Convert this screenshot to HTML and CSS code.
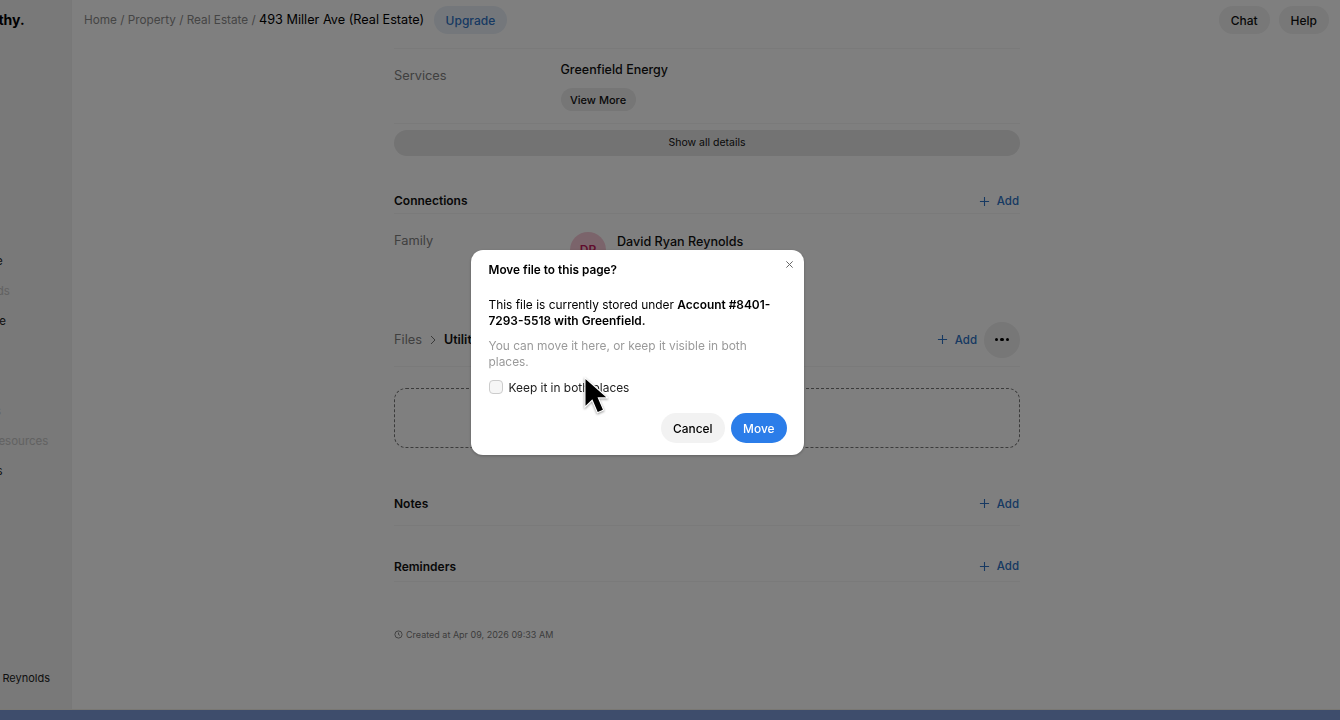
FILE: index.html
```html
<!DOCTYPE html>
<html lang="en">
<head>
<meta charset="utf-8">
<title>493 Miller Ave (Real Estate)</title>
<link rel="stylesheet" href="styles.css">
</head>
<body>
<div class="app">
  <aside class="sidebar">
    <div class="side-inner">
      <div class="logo">Worthy.</div>
      <nav class="nav">
        <div class="nav-item">Vehicle</div>
        <div class="nav-item muted">Rewards</div>
        <div class="nav-item">Finance</div>
        <div class="nav-item muted gap">Guides</div>
        <div class="nav-item muted">Your Resources</div>
        <div class="nav-item">Groups</div>
      </nav>
      <div class="user">Daniel Reynolds</div>
    </div>
  </aside>
  <main class="main">
    <header class="topbar">
      <div class="crumbs"><span class="crumb">Home / Property / Real Estate / </span><span class="current">493 Miller Ave (Real Estate)</span></div>
      <a class="pill upgrade">Upgrade</a>
      <div class="top-actions"><a class="pill">Chat</a><a class="pill">Help</a></div>
    </header>
    <div class="content">
      <section class="detail services">
        <div class="label">Services</div>
        <div class="value">
          <div class="name">Greenfield Energy</div>
          <a class="view-more">View More</a>
        </div>
      </section>
      <a class="show-all">Show all details</a>
      <section class="head connections"><h2>Connections</h2><a class="add"><svg class="plus" viewBox="0 0 12 12"><path d="M6 1v10M1 6h10"/></svg>Add</a></section>
      <section class="detail family">
        <div class="label">Family</div>
        <div class="avatar">DR</div>
        <div class="name">David Ryan Reynolds</div>
      </section>
      <section class="head files">
        <div class="path"><span class="label">Files</span><svg class="chev" viewBox="0 0 8 10"><path d="M2 1l4 4-4 4"/></svg><strong>Utilities</strong></div>
        <a class="add"><svg class="plus" viewBox="0 0 12 12"><path d="M6 1v10M1 6h10"/></svg>Add</a>
        <a class="more"><i></i><i></i><i></i></a>
      </section>
      <div class="drop"></div>
      <section class="head notes"><h2>Notes</h2><a class="add"><svg class="plus" viewBox="0 0 12 12"><path d="M6 1v10M1 6h10"/></svg>Add</a></section>
      <section class="head reminders"><h2>Reminders</h2><a class="add"><svg class="plus" viewBox="0 0 12 12"><path d="M6 1v10M1 6h10"/></svg>Add</a></section>
      <div class="created"><svg class="clock" viewBox="0 0 10 10"><circle cx="5" cy="5" r="4"/><path d="M5 2.8V5l1.6 1"/></svg>Created at Apr 09, 2026 09:33 AM</div>
    </div>
  </main>
</div>
<div class="taskbar"></div>
<div class="scrim"></div>
<div class="dialog">
  <svg class="close" viewBox="0 0 10 10"><path d="M1.5 1.5l7 7M8.5 1.5l-7 7"/></svg>
  <h1>Move file to this page?</h1>
  <p class="msg">This file is currently stored under <b>Account #8401-7293-5518 with Greenfield.</b></p>
  <p class="hint">You can move it here, or keep it visible in both places.</p>
  <label class="check"><span class="box"></span>Keep it in both places</label>
  <div class="actions"><a class="btn cancel">Cancel</a><a class="btn move">Move</a></div>
</div>
<svg class="cursor" viewBox="0 0 26 42"><path d="M2 1.5V32l7.5-7 5.5 13 6.5-3-5.5-12.5H26z"/></svg>
</body>
</html>
```
FILE: styles.css
```css
* { box-sizing: border-box; }
html, body { margin: 0; height: 720px; overflow: hidden; }
body { font-family: Inter, "Liberation Sans", sans-serif; color: #000; background: #fff; display: flex; flex-direction: column; }
a { display: inline-flex; align-items: center; }

.app { flex: 1; display: flex; min-height: 0; }
.taskbar { height: 11px; border-top: 1px solid #f4f1e6; background: #7d9bd8; }

.sidebar { width: 72px; flex: none; background: #f2f2f2; border-right: 1px solid #f0f0f0; overflow: hidden; }
.side-inner { width: 240px; margin-left: -37px; height: 100%; display: flex; flex-direction: column; font-size: 11.5px; }
.logo { font-weight: 700; font-size: 14px; height: 40px; line-height: 39px; margin-left: 7px; }
.nav { padding-top: 213px; display: flex; flex-direction: column; }
.nav-item { height: 30px; line-height: 17px; color: #222; }
.nav-item.muted { color: #c4c4c4; }
.nav-item.gap { margin-top: 60px; }
.user { margin: auto 0 24px 4px; font-size: 11px; line-height: 14px; color: #222; }

.main { flex: 1; min-width: 0; display: flex; flex-direction: column; }
.topbar { height: 40px; flex: none; padding: 6px 11px 0 12px; display: flex; align-items: flex-start; }
.crumbs { font-size: 12.7px; line-height: 28px; white-space: pre; }
.crumb { color: #8a8a8a; font-size: 11.75px; }
.pill { height: 28px; padding: 0 12px; border-radius: 14px; background: #f0f0f0; font-size: 12px; font-weight: 500; color: #111; }
.upgrade { margin-left: 10px; padding: 0 11.5px; background: #e8eff7; color: #2e72c4; }
.top-actions { margin-left: auto; display: flex; gap: 9px; }

.content { width: 626px; margin-left: 322px; }
.label { color: #808080; font-size: 12.8px; }
.name { font-size: 12.5px; font-weight: 500; color: #111; }
.detail { display: flex; }
.services { height: 76px; margin-top: 8px; padding-top: 19px; border-top: 1px solid #f4f4f4; border-bottom: 1px solid #f4f4f4; }
.services .label { width: 166.5px; }
.services .name { line-height: 26px; margin-top: -11px; }
.view-more { height: 23px; margin-top: 5px; padding: 0 9.5px; border-radius: 12px; background: #ececec; font-size: 11px; font-weight: 500; color: #111; }
.show-all { display: flex; justify-content: center; height: 26px; margin-top: 6px; padding-bottom: 1px; border-radius: 13px; background: #e6e6e6; font-size: 10.5px; color: #111; }

.head { display: flex; align-items: center; border-bottom: 1px solid #f4f4f4; }
h2 { margin: 0; font-size: 12px; font-weight: 600; color: #111; }
.add { margin-left: auto; padding-right: 1px; gap: 7px; font-size: 11.5px; font-weight: 500; color: #2e72c4; }
.plus { width: 11px; height: 11px; fill: none; stroke: currentColor; stroke-width: 1.2; }
.connections { height: 27px; margin-top: 31px; }
.connections .add { padding-top: 2px; }

.family { height: 91px; padding-top: 19px; }
.family .label { width: 176px; }
.family .name { margin-top: 1px; margin-left: 11px; font-size: 12.6px; }
.avatar { width: 36px; height: 36px; flex: none; border-radius: 50%; background: #f6c9d6; color: #c2185b; font-size: 12px; font-weight: 600; display: flex; align-items: center; justify-content: center; margin-top: -1px; padding-bottom: 2px; }

.files { height: 62px; padding-top: 8px; }
.path { display: flex; align-items: center; }
.chev { width: 8px; height: 10px; margin: 0 7px 0 7px; fill: none; stroke: #777; stroke-width: 1; }
.path strong { font-size: 12.5px; font-weight: 600; color: #111; }
.more { width: 36px; height: 36px; margin-left: 6px; border-radius: 50%; background: #eee; gap: 2px; justify-content: center; }
.more i { width: 3.5px; height: 3.5px; border-radius: 50%; background: #000; }
.drop { height: 60px; margin-top: 21px; border: 1px dashed #777; border-radius: 12px; }
.notes { height: 42px; margin-top: 36px; padding-bottom: 2px; }
.reminders { height: 31px; margin-top: 25px; }
.created { margin-top: 47px; display: flex; align-items: center; gap: 3px; font-size: 9px; color: #7a7a7a; }
.clock { width: 9px; height: 9px; fill: none; stroke: #777; stroke-width: 1; }

.scrim { position: fixed; inset: 0; background: rgba(0, 0, 0, .5); }

.dialog { position: fixed; left: 471px; top: 250px; width: 333px; height: 205px; padding: 13px 18px 12px 17.5px; background: #fff; border-radius: 12px; color: #000; box-shadow: 0 1px 3px rgba(0,0,0,.25); }
.dialog h1 { margin: 0; font-size: 11.8px; font-weight: 600; line-height: 15px; }
.close { position: absolute; top: 10px; right: 10.5px; width: 9px; height: 9px; fill: none; stroke: #666; stroke-width: 1.1; }
.msg, .hint { margin: 0; font-size: 11.9px; line-height: 16px; }
.msg { margin-top: 19px; }
.msg b { font-weight: 600; }
.hint { margin-top: 9px; color: #9a9a9a; }
.check { display: flex; align-items: center; gap: 6px; margin-top: 9px; height: 16px; font-size: 11.9px; color: #222; }
.box { width: 14px; height: 14px; border: 1px solid #ccc; border-radius: 4px; background: #f6f6f6; }
.actions { display: flex; justify-content: flex-end; gap: 6px; margin: 18px -1px 0 0; }
.btn { height: 30px; padding: 0 12px; border-radius: 15px; font-size: 11.9px; font-weight: 500; }
.move { padding: 0 12.5px; }
.cancel { background: #f2f2f2; color: #000; }
.move { background: #2b7de9; color: #fff; }

.cursor { position: fixed; left: 583px; top: 376px; width: 25px; height: 41px; fill: #000; stroke: #fff; stroke-width: 1.2; filter: drop-shadow(0 1px 1px rgba(0,0,0,.4)); }
```
